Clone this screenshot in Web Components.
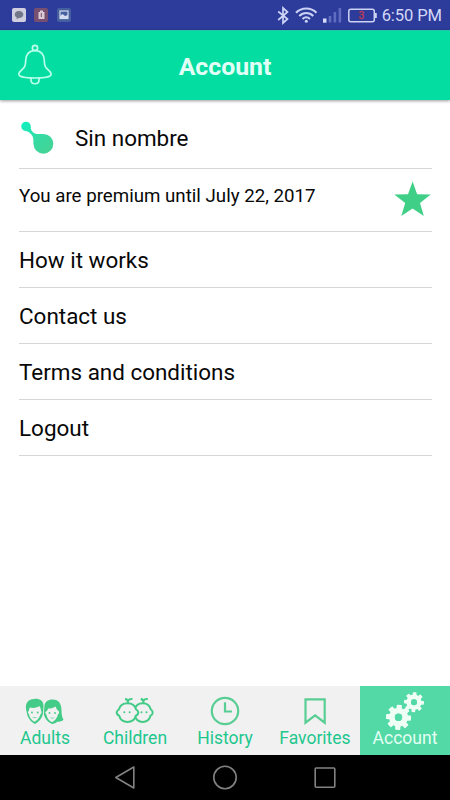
<!DOCTYPE html>
<html lang="en">
<head>
<meta charset="utf-8">
<title>Account</title>
<style>
html,body{margin:0;height:100%;background:#fff}
body{font-family:Roboto,"Liberation Sans",sans-serif;color:#080808;overflow:hidden}
</style>
</head>
<body>
<account-screen></account-screen>
<script>
const define = (name, html) => {
  const t = document.createElement('template');
  t.innerHTML = html;
  customElements.define(name, class extends HTMLElement {
    constructor() {
      super();
      this.attachShadow({mode: 'open'}).append(t.content.cloneNode(true));
    }
  });
};
const teeth = (cx, cy, r, w, n) => Array.from({length: n}, (_, i) =>
  `<rect x="${cx - w / 2}" y="${cy - r}" width="${w}" height="${r * .5}" rx=".8" transform="rotate(${i * 360 / n + 4} ${cx} ${cy})"/>`).join('');

define('status-bar', `<style>
:host{display:flex;height:30px;background:#2d3b9b;align-items:center;box-sizing:border-box;justify-content:space-between;padding-right:8px;color:#d3d8f6}
.right{display:flex;align-items:center}
svg{display:block}
.time{font-size:16.600px;line-height:30px;letter-spacing:-.1px;padding-top:1px}
</style>
<svg width="90" height="30">
<rect x="12" y="8" width="14" height="14" rx="2" fill="#cfcfdf"/><path d="M19 11c-2.600 0-4.200 1.500-4.200 3.500 0 1.300.8 2.500 2 3l-.2 1.700 2-1.200c2.700.2 4.700-1.300 4.700-3.500S21.500 11 19 11z" fill="#73778a"/>
<rect x="34" y="8" width="14" height="14" rx="2" fill="#774f70"/><path d="M38.500 12h1.500v-1.500h3V12h1.500v7h-6z" fill="#dbcbd6"/><path d="M41.300 13v4" stroke="#774f70" stroke-width="1"/>
<rect x="57" y="8" width="14" height="14" rx="2" fill="#46609f"/><rect x="60" y="11" width="8" height="7.500" fill="#46609f" stroke="#d3ddef" stroke-width="1.200"/><path d="M60 18v-2l2.500-2 2.500 2 3-1v3z" fill="#d3ddef"/>
</svg>
<div class="right">
<svg width="112" height="30" fill="none" stroke="#ccd3f5">
<path d="M8.200 11.500 17.500 19l-4.500 4V8l4.500 4L8.200 20" stroke-width="1.700"/>
<path d="M26 12.800c5.500-5.800 15-5.800 20.500 0M29.300 16c4-4 10-4 14 0M32.500 19c2.300-2.200 5.200-2.200 7.500 0" stroke-width="2"/><circle cx="36.300" cy="21.300" r="1.500" fill="#ccd3f5" stroke="none"/>
<g stroke="none"><rect x="53" y="18.500" width="3.500" height="4.200" fill="#d7ddff"/><g fill="#606cc0"><rect x="58.700" y="16" width="2.600" height="6.500"/><rect x="63.600" y="12" width="2.600" height="10.500"/><rect x="68.600" y="8" width="2.600" height="14.500"/></g></g>
<rect x="78.800" y="9.200" width="25.500" height="12.500" rx="2" stroke-width="1.500"/><path d="M105.800 13v5" stroke-width="2"/>
<text x="91.500" y="19.200" text-anchor="middle" font-size="10.500" fill="#c23c50" stroke="#c23c50" stroke-width=".3">3</text>
</svg><span class="time">6:50 PM</span></div>`);

define('app-header', `<style>
:host{display:grid;grid-template-columns:70px 1fr 70px;align-items:center;height:70px;background:#03dda1;box-shadow:0 1px 3px rgba(0,0,0,.4);position:relative;color:#e2fff7;border-top:1px solid #20c6a8;box-sizing:border-box}
h1{margin:0;text-align:center;font-size:24.800px;font-weight:700;line-height:30px;padding-top:2px}
svg{display:block}
</style>
<svg width="70" height="69" fill="none" stroke="#baffec" stroke-width="1.700"><circle cx="35" cy="17" r="2.600"/><path d="M35 19.500c-6 0-9.300 4.300-9.300 10 0 6-1.500 7.200-4.700 10.200-4.700 4.500-2.500 7.300 14 7.300s18.700-2.800 14-7.300c-3.200-3-4.700-4.200-4.700-10.200 0-5.700-3.300-10-9.300-10zM31 47v2c0 5 8 5 8 0V47"/></svg>
<h1><slot></slot></h1>`);

define('list-row', `<style>
:host{display:flex;align-items:center;height:56px;box-sizing:border-box;border-bottom:1px solid #d6d6d6;font-size:22.450px;line-height:28px;white-space:nowrap}
:host([kind=profile]){height:69px;padding-top:7px}
:host([kind=premium]){height:63px;font-size:18.720px;align-items:flex-start;padding-top:12px}
.text{flex:1;padding-top:1px}
::slotted(svg){display:block;flex:none}
</style><slot name="start"></slot><span class="text"><slot></slot></span><slot name="end"></slot>`);

define('nav-tab', `<style>
:host{display:flex;flex-direction:column;align-items:center;height:69px;font-size:17.500px;line-height:22px;color:#1dc78e;background:#f1f1f1}
:host([active]){background:#52d9a6;color:#e4fff2}
::slotted(svg){display:block;flex:none}
span{margin-top:-1px}
</style><slot name="icon"></slot><span><slot></slot></span>`);

define('tab-bar', `<style>:host{display:grid;grid-template-columns:repeat(5,1fr);height:69px}</style>
<nav-tab><svg slot="icon" width="90" height="42" fill="#43cb87">
<path d="M26.800 26.500c-2.500-8 .7-12.500 5.200-13.200 5-1.300 12-.3 11.500 7.500l-.5 6.500c-.7 5.500-4.700 9-8 10.700-3.500-1.700-7.500-5.500-8.200-11.500z"/>
<path d="M28.800 25c.2-2 .4-2.500 1.200-3.500 4 1 7.500 0 9.500-1.500 1 1.500 1.400 3 1.500 5 1 0 .8 2.500-.4 3-1 3.700-3.500 6.500-6 7.800-3-1.300-5-4-5.700-7.800-1.200-.5-1.400-3-.1-3z" fill="#f1f1f1"/>
<path d="M44.500 19c1-4 4.500-5.500 8-5.500 6.500 0 9 4.500 9 11 0 5 1 7.500 2 9.300-1.500 1.500-3.500 2-6.300 2-1.500 1.500-3.200 1.900-5 2.200-4-1.500-7.400-5-8.400-10z"/>
<path d="M46 25.500c1.200-.7 1.800-1.500 2-3 2 .3 5.500-.5 7.500-2 1 2.500 1.500 3 3 4.500 1 0 .8 3-.5 3.300-.7 3.700-3 6.500-5.800 7.900-3-1.300-5.300-4-5.800-7.700-1.200-.5-1.400-3-.4-3z" fill="#f1f1f1"/>
<circle cx="32" cy="26.500" r=".9"/><circle cx="37.700" cy="26.500" r=".9"/><circle cx="49.500" cy="27" r=".9"/><circle cx="55" cy="27" r=".9"/><path d="M32 31q2.700 2 5.400 0-2.700.5-5.400 0zM50 31.500q2.400 1.800 4.800 0-2.400.5-4.800 0z"/>
</svg>Adults</nav-tab>
<nav-tab><svg slot="icon" width="90" height="42" fill="none" stroke="#43cb87" stroke-width="2">
<path d="M52.700 17.200c4.500 0 7 2.300 8 6 1 .7 2 1.900 2 3.300s-1 2.700-2.200 3.200c-1 4-4.300 6.200-7.800 6.200s-6.800-2.200-7.800-6.200c-1.200-.5-2.200-1.800-2.200-3.200s1-2.600 2-3.300c1-3.700 3.500-6 8-6z"/><path d="M53.500 17c.3-2-.7-3.500-2.700-4.200M53.300 14.800c1-1.500 2.500-2 4.500-1.800"/>
<path d="M37.500 17.200c4.500 0 7.500 2.300 8.500 6 1 .7 2.300 1.900 2.300 3.300s-1.300 2.700-2.500 3.200c-1 4-4.500 6.200-8.300 6.200s-7.300-2.200-8.300-6.200c-1.200-.5-2.500-1.800-2.500-3.200s1.300-2.600 2.300-3.300c1-3.700 4-6 8.500-6z" fill="#f1f1f1"/><path d="M38 17c.3-2-.7-3.500-2.900-4.200M37.900 14.800c1-1.500 2.500-2 4.500-1.800"/>
<g fill="#43cb87" stroke="none"><circle cx="34.300" cy="26.300" r="1"/><circle cx="39.600" cy="26.300" r="1"/><circle cx="51.500" cy="26.300" r="1"/><circle cx="56.500" cy="26.300" r="1"/></g>
</svg>Children</nav-tab>
<nav-tab><svg slot="icon" width="90" height="42" fill="none" stroke="#59ce94" stroke-width="2.200"><circle cx="45" cy="25" r="13.200"/><path d="M45 16.300V25.500h7"/></svg>History</nav-tab>
<nav-tab><svg slot="icon" width="90" height="42" fill="none" stroke="#59ce94" stroke-width="2.200"><path d="M35.500 13.300h19.200v23.400L45.100 29.400l-9.600 7.300z"/></svg>Favorites</nav-tab>
<nav-tab active><svg slot="icon" width="90" height="42" fill="#effff5" style="overflow:visible">
${teeth(38.5, 31.3, 12.5, 5.2, 8)}${teeth(54, 16.2, 10, 3.8, 8)}
<circle cx="38.500" cy="31.300" r="6.600" fill="none" stroke="#effff5" stroke-width="5.800"/><circle cx="54" cy="16.200" r="5.300" fill="none" stroke="#effff5" stroke-width="4.600"/>
<circle cx="38.500" cy="31.300" r="3.600" fill="#52d9a6"/><circle cx="54" cy="16.200" r="3" fill="#52d9a6"/></svg>Account</nav-tab>`);

define('system-nav', `<style>:host{display:flex;height:45px;background:#000;justify-content:center;gap:10px}svg{display:block}</style>
<svg width="90" height="45" fill="none" stroke="#828282" stroke-width="1.600" stroke-linejoin="round"><path d="M53.800 12v21L35.800 22.500z"/></svg>
<svg width="90" height="45" fill="none" stroke="#828282" stroke-width="1.600"><circle cx="45" cy="22.500" r="11.200"/></svg>
<svg width="90" height="45" fill="none" stroke="#828282" stroke-width="1.600"><rect x="35.200" y="13" width="19.600" height="19.300" rx="1"/></svg>`);

define('account-screen', `<style>
:host{display:flex;flex-direction:column;width:450px;height:800px;background:#fff}
main{flex:1;padding:0 18.500px 0 19px}
</style>
<status-bar></status-bar>
<app-header>Account</app-header>
<main>
<list-row kind="profile"><svg slot="start" width="56" height="42"><defs><linearGradient id="g" gradientUnits="userSpaceOnUse" x1="4" y1="5" x2="32" y2="36"><stop offset="0" stop-color="#0df0c0"/><stop offset=".5" stop-color="#34dba4"/><stop offset="1" stop-color="#47d294"/></linearGradient></defs>
<g fill="url(#g)"><circle cx="7" cy="9.400" r="4.700"/><circle cx="24.400" cy="26.800" r="9.900"/><path d="M11.600 9.500c-.2 3 1.300 5.700 4.300 6.900 2.500 1 4.500.7 8.500.5L14.500 27c.1-4-.1-7.200-2.100-9.400-1.800-2-3.500-3.200-5.500-3.500z"/></g></svg>Sin nombre</list-row>
<list-row kind="premium">You are premium until July 22, 2017<svg slot="end" width="38" height="38"><path transform="translate(-.6 .4)" fill="#40cf87" d="M19.200.2l4.500 12.600 13.600.2-10.700 8.500 3.800 13.200-11.200-7.700-11.300 7.700 3.900-13.200L.9 13l13.700-.2z"/></svg></list-row>
<list-row>How it works</list-row>
<list-row>Contact us</list-row>
<list-row>Terms and conditions</list-row>
<list-row>Logout</list-row>
</main>
<tab-bar></tab-bar>
<system-nav></system-nav>`);
</script>
</body>
</html>
